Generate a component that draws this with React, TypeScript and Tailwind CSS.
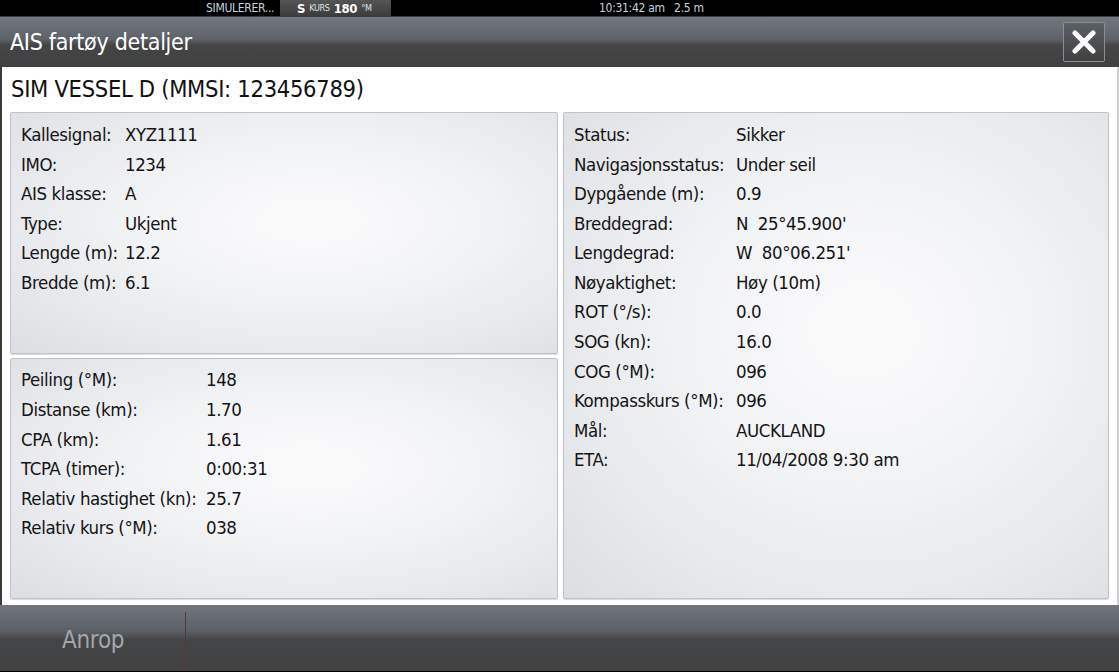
import React from 'react';

const FONT = "font-['DejaVu_Sans_Condensed','Roboto',sans-serif]";

type Row = [string, string];

const vesselInfo: Row[] = [
  ['Kallesignal:', 'XYZ1111'],
  ['IMO:', '1234'],
  ['AIS klasse:', 'A'],
  ['Type:', 'Ukjent'],
  ['Lengde (m):', '12.2'],
  ['Bredde (m):', '6.1'],
];

const relativeInfo: Row[] = [
  ['Peiling (°M):', '148'],
  ['Distanse (km):', '1.70'],
  ['CPA (km):', '1.61'],
  ['TCPA (timer):', '0:00:31'],
  ['Relativ hastighet (kn):', '25.7'],
  ['Relativ kurs (°M):', '038'],
];

const navInfo: Row[] = [
  ['Status:', 'Sikker'],
  ['Navigasjonsstatus:', 'Under seil'],
  ['Dypgående (m):', '0.9'],
  ['Breddegrad:', 'N  25°45.900\''],
  ['Lengdegrad:', 'W  80°06.251\''],
  ['Nøyaktighet:', 'Høy (10m)'],
  ['ROT (°/s):', '0.0'],
  ['SOG (kn):', '16.0'],
  ['COG (°M):', '096'],
  ['Kompasskurs (°M):', '096'],
  ['Mål:', 'AUCKLAND'],
  ['ETA:', '11/04/2008 9:30 am'],
];

function Panel({
  rows,
  labelWidth,
  className,
}: {
  rows: Row[];
  labelWidth: string;
  className?: string;
}) {
  return (
    <div
      className={`rounded-[2px] border border-[#bfc2c7] bg-[radial-gradient(ellipse_at_55%_45%,#fbfbfc_0%,#f1f2f4_45%,#dcdee2_100%)] px-[10px] pt-[7px] shadow-[0_1px_1px_rgba(0,0,0,0.15)] ${className ?? ''}`}
    >
      {rows.map(([label, value]) => (
        <div
          key={label}
          className="flex h-[29.6px] items-center text-[18.5px] tracking-[-0.4px] text-[#141414]"
        >
          <span className={`${labelWidth} shrink-0 whitespace-nowrap`}>{label}</span>
          <span className="whitespace-pre">{value}</span>
        </div>
      ))}
    </div>
  );
}

export default function App() {
  return (
    <div className={`flex h-[672px] w-[1119px] flex-col overflow-hidden bg-black ${FONT}`}>
      {/* Status bar */}
      <div className="flex h-[17px] shrink-0 items-center border-b border-[#3a3d42] bg-black text-[12px] leading-none tracking-[-0.3px] text-[#c9d2da]">
        <span className="ml-[206px] w-[74px] whitespace-nowrap">SIMULERER...</span>
        <div className="flex h-[17px] w-[111px] items-center gap-[4px] bg-[linear-gradient(to_bottom,#555_0%,#3b3b3b_100%)] pl-[17px] text-[#dfe4e8]">
          <span className="text-[13px] font-bold text-white">S</span>
          <span className="text-[9px]">KURS</span>
          <span className="text-[13px] font-bold text-white">180</span>
          <span className="text-[9px]">°M</span>
        </div>
        <span className="ml-[208px] whitespace-pre">10:31:42 am   2.5 m</span>
      </div>

      {/* Header */}
      <div className="flex h-[50px] shrink-0 items-center justify-between bg-[linear-gradient(to_bottom,#73787f_0%,#5d6168_45%,#444547_56%,#404040_100%)] pl-[10px] pr-[14px]">
        <h1 className="text-[23px] tracking-[-0.3px] text-white">AIS fartøy detaljer</h1>
        <button className="flex h-[40px] w-[42px] items-center justify-center rounded-[2px] border border-[#8a8d92] bg-[linear-gradient(to_bottom,#5b5f65_0%,#404040_100%)]">
          <svg width="24" height="24" viewBox="0 0 24 24">
            <path d="M3 3 L21 21 M21 3 L3 21" stroke="white" strokeWidth="5" strokeLinecap="round" />
          </svg>
        </button>
      </div>

      {/* Content */}
      <div className="flex flex-1 flex-col border-x-2 border-l-[#3a3a3a] border-r-[#d0d0d0] bg-white px-[8px] pb-[6px]">
        <div className="flex h-[45px] items-center pl-[1px] text-[23.5px] tracking-[-0.3px] text-[#111]">
          SIM VESSEL D (MMSI: 123456789)
        </div>
        <div className="flex flex-1 gap-[5px]">
          <div className="flex w-[548px] flex-col gap-[4px]">
            <Panel rows={vesselInfo} labelWidth="w-[104px]" className="flex-1" />
            <Panel rows={relativeInfo} labelWidth="w-[185px]" className="flex-1" />
          </div>
          <Panel rows={navInfo} labelWidth="w-[162px]" className="flex-1" />
        </div>
      </div>

      {/* Footer */}
      <div className="flex h-[67px] shrink-0 border-b border-black bg-[linear-gradient(to_bottom,#71767d_0%,#5b5f66_40%,#444547_52%,#414141_100%)]">
        <div className="flex w-[185px] items-center pl-[62px] pt-[4px] text-[24px] tracking-[-0.3px] text-[#a3a7ac]">
          Anrop
        </div>
        <div className="mt-[7px] w-px bg-[#5e3535]" />
      </div>
    </div>
  );
}
